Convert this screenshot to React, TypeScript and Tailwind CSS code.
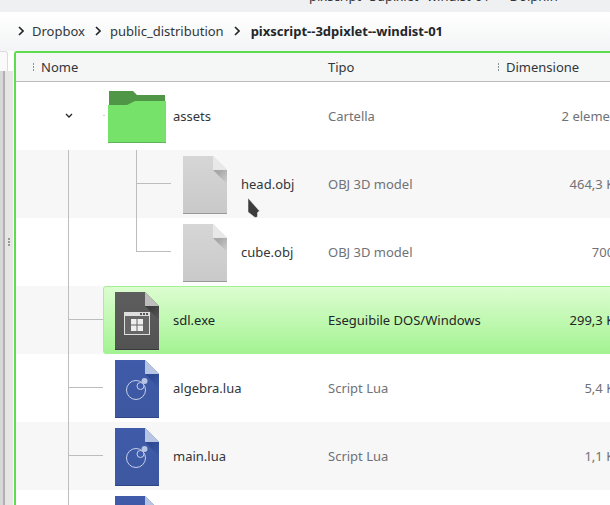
import * as React from "react"

const font = "font-['Noto_Sans',sans-serif]"

function FileIcon({ id, from, to, foot, fold, shade, children }: {
  id: string
  from: string
  to: string
  foot: string
  fold: string
  shade: string
  children?: React.ReactNode
}) {
  return (
    <svg width="44" height="58" viewBox="0 0 44 58" className="mt-[2px]">
      <defs>
        <linearGradient id={id} x1="0" y1="0" x2="0" y2="1">
          <stop offset="0" stopColor={from} />
          <stop offset="1" stopColor={to} />
        </linearGradient>
        <linearGradient id={id + "-s"} x1="0" y1="0" x2="1" y2="1">
          <stop offset="0.3" stopColor={shade} />
          <stop offset="1" stopColor={shade} stopOpacity="0" />
        </linearGradient>
      </defs>
      <path d="M0 0H30L44 14V58H0Z" fill={`url(#${id})`} />
      <path d="M30 14H44V28Z" fill={`url(#${id}-s)`} />
      <path d="M30 0L44 14H30Z" fill={fold} />
      <rect x="0" y="57" width="44" height="1" fill={foot} />
      {children}
    </svg>
  )
}

function GenericIcon({ id }: { id: string }) {
  return <FileIcon id={id} from="#d6d6d6" to="#c9c9c9" foot="#999999" fold="#e8e8e8" shade="#a8a8a8" />
}

function ExeIcon() {
  return (
    <FileIcon id="exe" from="#5e5e5e" to="#525252" foot="#3a3a3a" fold="#bdbdbd" shade="#3e3e3e">
      <rect x="9.5" y="20.5" width="25" height="22" fill="#666666" stroke="#dedede" />
      <rect x="9" y="20" width="26" height="4" fill="#dedede" />
      <rect x="25" y="21" width="2" height="2" fill="#555555" />
      <rect x="28" y="21" width="2" height="2" fill="#555555" />
      <rect x="31" y="21" width="2" height="2" fill="#555555" />
      <rect x="16" y="27" width="5.5" height="5.5" fill="#eeeeee" />
      <rect x="22.5" y="27" width="5.5" height="5.5" fill="#eeeeee" />
      <rect x="16" y="33.5" width="5.5" height="5.5" fill="#eeeeee" />
      <rect x="22.5" y="33.5" width="5.5" height="5.5" fill="#eeeeee" />
    </FileIcon>
  )
}

function LuaIcon({ id }: { id: string }) {
  return (
    <FileIcon id={id} from="#3f5ba9" to="#3d57a0" foot="#2f4684" fold="#b7c5e4" shade="#2f4a94">
      <circle cx="21" cy="30" r="9.5" fill="none" stroke="#c5d0ea" strokeWidth="1" />
      <circle cx="25.5" cy="26" r="3.5" fill="#3f5ba9" stroke="#c5d0ea" strokeWidth="1" />
      <circle cx="29.5" cy="21" r="3" fill="#b7c5e4" />
    </FileIcon>
  )
}

function FolderIcon() {
  return (
    <svg width="58" height="58" viewBox="0 0 58 58">
      <path d="M1 4H25L29 8H57V20H1Z" fill="#4f9646" />
      <path d="M0 18H19L27 14H58V56H0Z" fill="#76e26a" />
      <rect x="0" y="55" width="58" height="1" fill="#5fb455" />
    </svg>
  )
}

function Crumb({ label, bold, space }: { label: string; bold?: boolean; space: string }) {
  return (
    <div className="flex items-center">
      <svg width="6" height="10" viewBox="0 0 6 10" className={space}>
        <path d="M1 1L5 5L1 9" fill="none" stroke="#232629" strokeWidth="1.6" />
      </svg>
      <span className={bold ? "font-bold text-[#232629]" : "text-[#31363b]"}>{label}</span>
    </div>
  )
}

function Handle() {
  return (
    <div className="flex flex-col gap-[1px]">
      <div className="w-[1px] h-[2px] bg-[#8f9295]" />
      <div className="w-[1px] h-[2px] bg-[#8f9295]" />
      <div className="w-[1px] h-[2px] bg-[#8f9295]" />
    </div>
  )
}

function Row({ name, type, size, icon, indent, alt, selected, children }: {
  name?: string
  type?: string
  size?: string
  icon: React.ReactNode
  indent?: boolean
  alt?: boolean
  selected?: boolean
  children?: React.ReactNode
}) {
  return (
    <div className={`relative h-[68px] flex-none flex items-center ${alt ? "bg-[#f7f7f7]" : "bg-white"}`}>
      {selected && (
        <div className="absolute top-0 bottom-0 left-[87px] -right-2 rounded-[3px] border border-[#a3f192] bg-gradient-to-b from-[#dcfdd0] to-[#a3f392]" />
      )}
      {children}
      <div className={`relative flex-none w-[312px] flex items-center ${indent ? "pl-[160px]" : "pl-[92px]"}`}>
        <div className="w-[58px] flex-none flex justify-center">{icon}</div>
        <span className={`ml-[7px] ${selected ? "text-[#232629]" : "text-[#31363b]"}`}>{name}</span>
      </div>
      <span className={`relative flex-none w-[172px] ${selected ? "text-[#232629]" : "text-[#6f7276]"}`}>{type}</span>
      <span className={`relative flex-none w-[126px] text-right whitespace-nowrap ${selected ? "text-[#232629]" : "text-[#6f7276]"}`}>{size}</span>
    </div>
  )
}

// tree branches sit over the row backgrounds
function Line({ left }: { left: string }) {
  return <div className={`absolute top-0 bottom-0 w-[1px] bg-[#bdbdbd] ${left}`} />
}

function Branch({ nested, last }: { nested?: boolean; last?: boolean }) {
  return (
    <>
      <div className={`absolute top-0 w-[1px] bg-[#bdbdbd] ${nested ? "left-[120px]" : "left-[52px]"} ${last ? "h-[34px]" : "bottom-0"}`} />
      <div className={`absolute top-[33px] h-[1px] w-[35px] bg-[#bdbdbd] ${nested ? "left-[120px]" : "left-[52px]"}`} />
    </>
  )
}

export default function App() {
  return (
    <div className={`${font} relative w-[610px] h-[505px] overflow-hidden flex flex-col bg-white text-[13px] leading-[18px]`}>
      {/* Title bar, cut off by the crop */}
      <div className="h-3 flex-none bg-[#eff0f1] overflow-hidden">
        <div className="-mt-[13px] pl-[309px] text-[#31363b] whitespace-nowrap">pixscript--3dpixlet--windist-01 — Dolphin</div>
      </div>

      {/* Breadcrumbs */}
      <div className="h-[39px] flex-none flex items-center gap-[10px] pl-[18px] pb-[1px] bg-gradient-to-b from-white to-[#f3f4f5]">
        <Crumb label="Dropbox" space="mr-[8px]" />
        <Crumb label="public_distribution" space="mr-[9px]" />
        <Crumb label="pixscript--3dpixlet--windist-01" bold space="mr-[11px]" />
      </div>

      <div className="flex-1 flex min-h-0">
        {/* Places panel edge and splitter */}
        <div className="w-[14px] flex-none flex flex-col">
          <div className="h-[20px] w-[8px] flex-none border-t border-r border-[#dcdcdc] rounded-tr-[3px] bg-[#fafafa]" />
          <div className="flex-1 flex">
            <div className="w-[3px] bg-[#d8d8d8]" />
            <div className="w-[2px] bg-[#b0b0b0]" />
            <div className="flex-1 bg-[#e6e6e6] flex justify-center pt-[167px] pr-[1px]">
              <div className="flex flex-col gap-[1px]">
                <div className="w-[2px] h-[2px] bg-[#9a9a9a]" />
                <div className="w-[2px] h-[2px] bg-[#9a9a9a]" />
                <div className="w-[2px] h-[2px] bg-[#9a9a9a]" />
              </div>
            </div>
            <div className="w-[1px] bg-white" />
          </div>
        </div>

        {/* File view */}
        <div className="flex-1 min-w-0 flex flex-col border-t-2 border-l-2 border-[#5fdc4e] rounded-tl-[3px] overflow-hidden">
          <div className="h-[29px] flex-none relative flex items-center bg-[#f5f6f6] border-b border-[#bcbcbc] text-[#31363b]">
            <div className="absolute left-[17px]"><Handle /></div>
            <span className="absolute left-[25px]">Nome</span>
            <span className="absolute left-[312px]">Tipo</span>
            <div className="absolute left-[482px]"><Handle /></div>
            <span className="absolute left-[490px]">Dimensione</span>
          </div>

          <Row name="assets" type="Cartella" size="2 elementi" icon={<FolderIcon />}>
            <svg width="8" height="6" viewBox="0 0 8 6" className="absolute left-[49px] top-[31px]">
              <path d="M1 1L4 4L7 1" fill="none" stroke="#232629" strokeWidth="1.3" />
            </svg>
            <div className="absolute left-[87px] top-[33px] w-[2px] h-[1px] bg-[#cfcfcf]" />
          </Row>
          <Row name="head.obj" type="OBJ 3D model" size="464,3 KiB" icon={<GenericIcon id="head" />} indent alt>
            <Line left="left-[52px]" />
            <Branch nested />
          </Row>
          <Row name="cube.obj" type="OBJ 3D model" size="700 B" icon={<GenericIcon id="cube" />} indent>
            <Line left="left-[52px]" />
            <Branch nested last />
          </Row>
          <Row name="sdl.exe" type="Eseguibile DOS/Windows" size="299,3 KiB" icon={<ExeIcon />} alt selected>
            <Branch />
          </Row>
          <Row name="algebra.lua" type="Script Lua" size="5,4 KiB" icon={<LuaIcon id="algebra" />}>
            <Branch />
          </Row>
          <Row name="main.lua" type="Script Lua" size="1,1 KiB" icon={<LuaIcon id="main" />} alt>
            <Branch />
          </Row>
          <Row icon={<LuaIcon id="next" />}>
            <Branch />
          </Row>
        </div>
      </div>

      {/* Mouse pointer */}
      <svg width="14" height="22" viewBox="0 0 14 22" className="absolute left-[247px] top-[197px]">
        <path d="M1 1V15L8 20.5L10.5 20L10.5 15.5L12.5 14Z" fill="#3c3c3c" stroke="#f4f4f4" strokeWidth="0.5" />
      </svg>
    </div>
  )
}
